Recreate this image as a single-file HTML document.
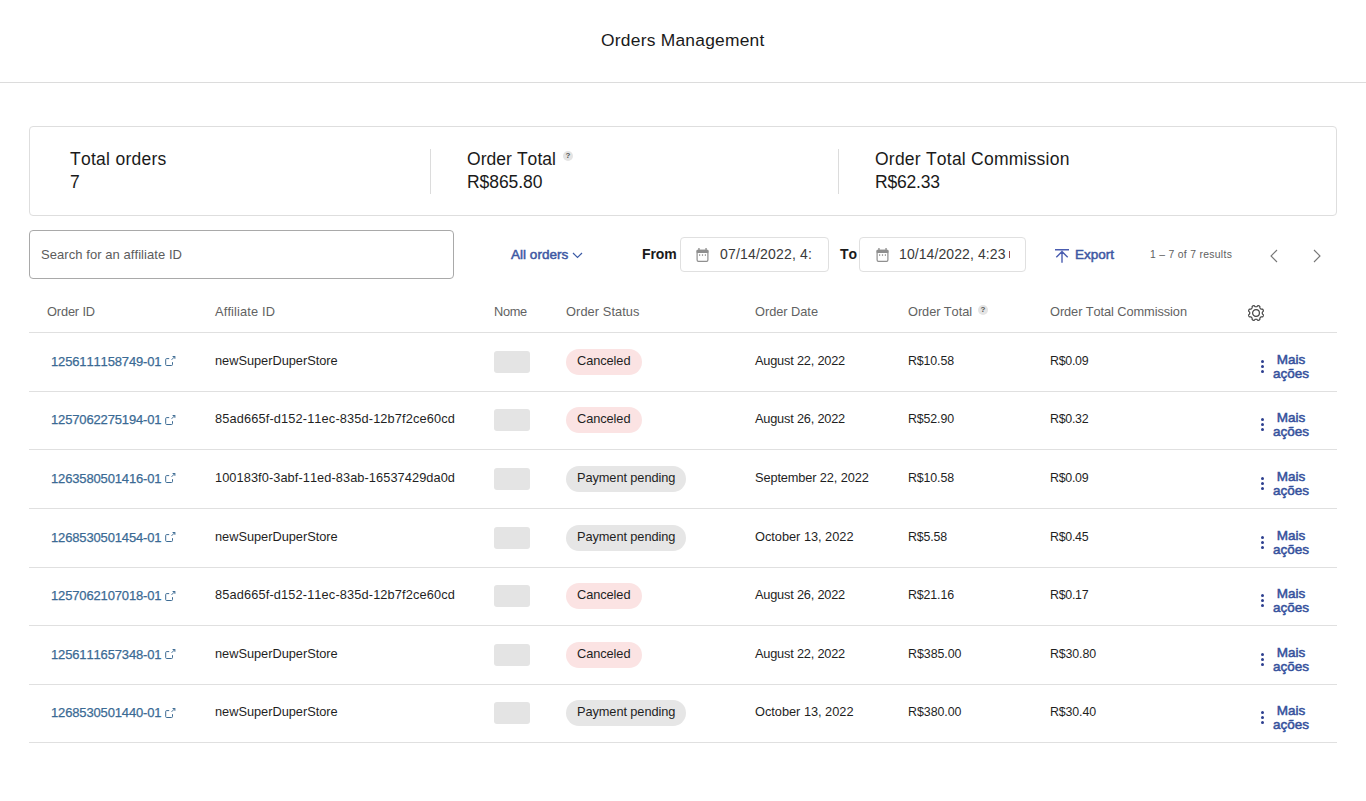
<!DOCTYPE html>
<html><head><meta charset="utf-8"><title>Orders Management</title>
<style>
*{box-sizing:border-box;margin:0;padding:0}
html,body{width:1366px;height:801px;overflow:hidden;background:#fff}
body{font-family:"Liberation Sans",sans-serif;color:#1f1f1f;position:relative;font-kerning:none}
.abs{position:absolute;white-space:nowrap}
.title{position:absolute;left:601px;top:30px;font-size:17.4px;line-height:20px;color:#1a1a1a;white-space:nowrap}
.hdrline{position:absolute;left:0;top:82px;width:1366px;height:1px;background:#dcdcdc}
.card{position:absolute;left:29px;top:126px;width:1308px;height:90px;border:1px solid #dedede;border-radius:4px}
.sum{position:absolute;font-size:17.5px;line-height:23px;color:#1a1a1a;white-space:nowrap}
.vdiv{position:absolute;top:149px;width:1px;height:45px;background:#dcdcdc}
.qm{position:absolute;width:10px;height:10px;border-radius:50%;background:#e4e4e4;color:#555;font-size:8px;line-height:10px;text-align:center;font-weight:bold}
.search{position:absolute;left:29px;top:230px;width:425px;height:49px;border:1px solid #a9a9a9;border-radius:4px}
.ph{position:absolute;left:11px;top:16px;font-size:13px;line-height:16px;color:#5c5c5c;white-space:nowrap}
.allord{position:absolute;left:511px;top:247px;font-size:13.5px;line-height:16px;color:#3d58a3;-webkit-text-stroke:0.5px #3d58a3;white-space:nowrap}
.lbl{position:absolute;top:246px;font-size:14px;line-height:16px;font-weight:bold;color:#1a1a1a}
.dinp{position:absolute;top:237px;height:35px;border:1px solid #e0e0e0;border-radius:4px}
.dt{position:absolute;top:8px;left:39px;font-size:14px;line-height:16px;color:#3a3a3a;white-space:nowrap}
.cal{position:absolute;top:10px}
.export{position:absolute;left:1075px;top:247px;font-size:13.5px;line-height:16px;color:#3d58a3;-webkit-text-stroke:0.5px #3d58a3;white-space:nowrap}
.results{position:absolute;left:1150px;top:248px;font-size:10.4px;line-height:13px;color:#606060;white-space:nowrap}
.th{position:absolute;top:304px;font-size:12.8px;line-height:16px;color:#626262;white-space:nowrap}
.tline{position:absolute;left:29px;width:1308px;height:1px;background:#e0e0e0}
.row{position:absolute;left:0;width:1366px}
.c{position:absolute;top:50%;margin-top:-9px;font-size:12.8px;line-height:16px;white-space:nowrap;color:#1f1f1f}
.oid{left:51px;color:#3a6a94;margin-top:-8px;font-size:13px;-webkit-text-stroke:0.25px #3a6a94}
.ext{position:absolute;left:113px;top:1.5px}
.aff{left:215px}
.sk{position:absolute;left:494px;top:50%;margin-top:-11px;width:36px;height:22px;border-radius:3px;background:#e4e4e4}
.pill{position:absolute;left:566px;top:50%;margin-top:-13px;height:26px;line-height:24px;border-radius:13px;padding:0 11px;font-size:12.8px;white-space:nowrap;color:#1f1f1f}
.cancel{background:#fbe3e3;width:76px}
.pend{background:#e6e6e6;width:120px}
.date{left:755px}
.tot{left:908px;font-size:12.4px}
.com{left:1050px;font-size:12.4px}
.dots{position:absolute;left:1261px;top:50%;margin-top:-2px;width:4px;height:13px}
.dots i{display:block;width:3px;height:3px;border-radius:50%;background:#2d3f8f;margin-bottom:2px}
.more{position:absolute;left:1271px;top:50%;margin-top:-9px;width:40px;text-align:center;font-size:13.5px;line-height:14px;color:#34509c;-webkit-text-stroke:0.5px #34509c}
</style></head><body>
<div class="title" style=";letter-spacing:0.242px">Orders Management</div>
<div class="hdrline"></div>
<div class="card"></div>
<div class="sum" style="left:70px;top:148px"><span style=";letter-spacing:0.272px">Total orders</span><br>7</div>
<div class="vdiv" style="left:430px"></div>
<div class="sum" style="left:467px;top:148px"><span style=";letter-spacing:0.048px">Order Total</span><br><span style=";letter-spacing:-0.054px">R$865.80</span></div><span class="qm" style="left:563px;top:151px">?</span>
<div class="vdiv" style="left:838px"></div>
<div class="sum" style="left:875px;top:148px"><span style=";letter-spacing:0.226px">Order Total Commission</span><br><span style=";letter-spacing:-0.180px">R$62.33</span></div>

<div class="search"><span class="ph" style=";letter-spacing:0.060px">Search for an affiliate ID</span></div>
<div class="allord"><span style=";letter-spacing:0.028px">All orders</span> <svg width="11" height="7" viewBox="0 0 11 7" style="vertical-align:middle"><path d="M1 1l4.5 4.5L10 1" fill="none" stroke="#3b5aa5" stroke-width="1.2"/></svg></div>
<div class="lbl" style="left:642px;letter-spacing:-0.100px">From</div>
<div class="dinp" style="left:680px;width:149px"><svg class="cal" style="left:15px" width="13" height="14" viewBox="0 0 13 14"><rect x="1.1" y="2.3" width="10.8" height="11" rx="1.3" fill="none" stroke="#8f8f8f" stroke-width="1.2"/><rect x="0.5" y="1.7" width="12" height="3.2" rx="1" fill="#8f8f8f"/><rect x="2.3" y="0" width="1.3" height="2.5" fill="#8f8f8f"/><rect x="9.4" y="0" width="1.3" height="2.5" fill="#8f8f8f"/><rect x="3" y="6.3" width="1.2" height="1.5" fill="#8f8f8f"/><rect x="5.9" y="6.3" width="1.2" height="1.5" fill="#8f8f8f"/><rect x="8.8" y="6.3" width="1.2" height="1.5" fill="#8f8f8f"/></svg><span class="dt" style=";letter-spacing:0.183px">07/14/2022, 4:</span></div>
<div class="lbl" style="left:840px;letter-spacing:0.000px">To</div>
<div class="dinp" style="left:859px;width:167px"><svg class="cal" style="left:16px" width="13" height="14" viewBox="0 0 13 14"><rect x="1.1" y="2.3" width="10.8" height="11" rx="1.3" fill="none" stroke="#8f8f8f" stroke-width="1.2"/><rect x="0.5" y="1.7" width="12" height="3.2" rx="1" fill="#8f8f8f"/><rect x="2.3" y="0" width="1.3" height="2.5" fill="#8f8f8f"/><rect x="9.4" y="0" width="1.3" height="2.5" fill="#8f8f8f"/><rect x="3" y="6.3" width="1.2" height="1.5" fill="#8f8f8f"/><rect x="5.9" y="6.3" width="1.2" height="1.5" fill="#8f8f8f"/><rect x="8.8" y="6.3" width="1.2" height="1.5" fill="#8f8f8f"/></svg><span class="dt" style=";letter-spacing:0.090px">10/14/2022, 4:23</span><i style="position:absolute;left:149px;top:13px;width:1px;height:7px;background:#9a4a4a"></i></div>
<svg class="abs" style="left:1054px;top:248px" width="16" height="16" viewBox="0 0 16 16"><path d="M1 1.7h14M8 3.3v11.5M2.3 9.3L8 3.6l5.7 5.7" fill="none" stroke="#4a5db0" stroke-width="1.4"/></svg>
<div class="export" style=";letter-spacing:-0.006px">Export</div>
<div class="results" style=";letter-spacing:0.296px">1 – 7 of 7 results</div>
<svg class="abs" style="left:1268px;top:249px" width="11" height="14" viewBox="0 0 11 14"><path d="M9 1L3 7l6 6" fill="none" stroke="#777" stroke-width="1.1"/></svg>
<svg class="abs" style="left:1312px;top:249px" width="11" height="14" viewBox="0 0 11 14"><path d="M2 1l6 6-6 6" fill="none" stroke="#777" stroke-width="1.1"/></svg>

<div class="th" style="left:47px;letter-spacing:-0.144px">Order ID</div>
<div class="th" style="left:215px;letter-spacing:0.145px">Affiliate ID</div>
<div class="th" style="left:494px;letter-spacing:-0.326px">Nome</div>
<div class="th" style="left:566px;letter-spacing:0.083px">Order Status</div>
<div class="th" style="left:755px;letter-spacing:-0.033px">Order Date</div>
<div class="th" style="left:908px;letter-spacing:-0.068px">Order Total</div><span class="qm" style="left:978px;top:305px">?</span>
<div class="th" style="left:1050px;letter-spacing:-0.078px">Order Total Commission</div>
<svg class="abs" style="left:1248px;top:305px" width="16" height="16" viewBox="0 0 16 16"><circle cx="8" cy="8" r="3.4" fill="none" stroke="#444" stroke-width="1.2"/><path d="M8.00,1.75 L8.25,1.75 L8.49,1.74 L8.75,1.69 L9.03,1.51 L9.37,1.13 L9.73,0.78 L10.07,0.64 L10.39,0.66 L10.68,0.73 L10.97,0.84 L11.24,0.97 L11.50,1.12 L11.73,1.33 L11.88,1.67 L11.89,2.18 L11.86,2.68 L11.94,3.01 L12.08,3.22 L12.25,3.41 L12.42,3.58 L12.59,3.75 L12.78,3.92 L12.99,4.06 L13.32,4.14 L13.82,4.11 L14.33,4.12 L14.67,4.27 L14.88,4.50 L15.03,4.76 L15.16,5.03 L15.27,5.32 L15.34,5.61 L15.36,5.93 L15.22,6.27 L14.87,6.63 L14.49,6.97 L14.31,7.25 L14.26,7.51 L14.25,7.75 L14.25,8.00 L14.25,8.25 L14.26,8.49 L14.31,8.75 L14.49,9.03 L14.87,9.37 L15.22,9.73 L15.36,10.07 L15.34,10.39 L15.27,10.68 L15.16,10.97 L15.03,11.24 L14.88,11.50 L14.67,11.73 L14.33,11.88 L13.82,11.89 L13.32,11.86 L12.99,11.94 L12.78,12.08 L12.59,12.25 L12.42,12.42 L12.25,12.59 L12.08,12.78 L11.94,12.99 L11.86,13.32 L11.89,13.82 L11.88,14.33 L11.73,14.67 L11.50,14.88 L11.24,15.03 L10.97,15.16 L10.68,15.27 L10.39,15.34 L10.07,15.36 L9.73,15.22 L9.37,14.87 L9.03,14.49 L8.75,14.31 L8.49,14.26 L8.25,14.25 L8.00,14.25 L7.75,14.25 L7.51,14.26 L7.25,14.31 L6.97,14.49 L6.63,14.87 L6.27,15.22 L5.93,15.36 L5.61,15.34 L5.32,15.27 L5.03,15.16 L4.76,15.03 L4.50,14.88 L4.27,14.67 L4.12,14.33 L4.11,13.82 L4.14,13.32 L4.06,12.99 L3.92,12.78 L3.75,12.59 L3.58,12.42 L3.41,12.25 L3.22,12.08 L3.01,11.94 L2.68,11.86 L2.18,11.89 L1.67,11.88 L1.33,11.73 L1.12,11.50 L0.97,11.24 L0.84,10.97 L0.73,10.68 L0.66,10.39 L0.64,10.07 L0.78,9.73 L1.13,9.37 L1.51,9.03 L1.69,8.75 L1.74,8.49 L1.75,8.25 L1.75,8.00 L1.75,7.75 L1.74,7.51 L1.69,7.25 L1.51,6.97 L1.13,6.63 L0.78,6.27 L0.64,5.93 L0.66,5.61 L0.73,5.32 L0.84,5.03 L0.97,4.76 L1.12,4.50 L1.33,4.27 L1.67,4.12 L2.18,4.11 L2.68,4.14 L3.01,4.06 L3.22,3.92 L3.41,3.75 L3.58,3.58 L3.75,3.41 L3.92,3.22 L4.06,3.01 L4.14,2.68 L4.11,2.18 L4.12,1.67 L4.27,1.33 L4.50,1.12 L4.76,0.97 L5.03,0.84 L5.32,0.73 L5.61,0.66 L5.93,0.64 L6.27,0.78 L6.63,1.13 L6.97,1.51 L7.25,1.69 L7.51,1.74 L7.75,1.75Z" fill="none" stroke="#444" stroke-width="1.2" stroke-linejoin="round"/></svg>
<div class="tline" style="top:332px"></div><div class="tline" style="top:391px"></div><div class="tline" style="top:449px"></div><div class="tline" style="top:508px"></div><div class="tline" style="top:567px"></div><div class="tline" style="top:625px"></div><div class="tline" style="top:684px"></div><div class="tline" style="top:742px"></div>
<div class="row" style="top:332px;height:59px">
<span class="c oid"><span style=";letter-spacing:-0.147px">1256111158749-01</span><svg class="ext" width="12" height="12" viewBox="0 0 12 12"><path d="M5.2 3.6H2.6Q1.7 3.6 1.7 4.5V9.6Q1.7 10.5 2.6 10.5H7.6Q8.5 10.5 8.5 9.6V7.2" fill="none" stroke="#3d6b93" stroke-width="1"/><path d="M8.6 1.5H10.9V3.8M10.9 1.5L7.6 4.8" fill="none" stroke="#3d6b93" stroke-width="1"/></svg></span>
<span class="c aff" style=";letter-spacing:-0.022px">newSuperDuperStore</span>
<span class="sk"></span>
<span class="pill cancel"><span style=";letter-spacing:-0.077px">Canceled</span></span>
<span class="c date" style=";letter-spacing:-0.215px">August 22, 2022</span>
<span class="c tot" style=";letter-spacing:-0.132px">R$10.58</span>
<span class="c com" style=";letter-spacing:-0.285px">R$0.09</span>
<span class="dots"><i></i><i></i><i></i></span>
<span class="more">Mais<br>ações</span>
</div><div class="row" style="top:391px;height:58px">
<span class="c oid"><span style=";letter-spacing:-0.147px">1257062275194-01</span><svg class="ext" width="12" height="12" viewBox="0 0 12 12"><path d="M5.2 3.6H2.6Q1.7 3.6 1.7 4.5V9.6Q1.7 10.5 2.6 10.5H7.6Q8.5 10.5 8.5 9.6V7.2" fill="none" stroke="#3d6b93" stroke-width="1"/><path d="M8.6 1.5H10.9V3.8M10.9 1.5L7.6 4.8" fill="none" stroke="#3d6b93" stroke-width="1"/></svg></span>
<span class="c aff" style=";letter-spacing:0.126px">85ad665f-d152-11ec-835d-12b7f2ce60cd</span>
<span class="sk"></span>
<span class="pill cancel"><span style=";letter-spacing:-0.077px">Canceled</span></span>
<span class="c date" style=";letter-spacing:-0.215px">August 26, 2022</span>
<span class="c tot" style=";letter-spacing:-0.132px">R$52.90</span>
<span class="c com" style=";letter-spacing:-0.285px">R$0.32</span>
<span class="dots"><i></i><i></i><i></i></span>
<span class="more">Mais<br>ações</span>
</div><div class="row" style="top:449px;height:59px">
<span class="c oid"><span style=";letter-spacing:-0.147px">1263580501416-01</span><svg class="ext" width="12" height="12" viewBox="0 0 12 12"><path d="M5.2 3.6H2.6Q1.7 3.6 1.7 4.5V9.6Q1.7 10.5 2.6 10.5H7.6Q8.5 10.5 8.5 9.6V7.2" fill="none" stroke="#3d6b93" stroke-width="1"/><path d="M8.6 1.5H10.9V3.8M10.9 1.5L7.6 4.8" fill="none" stroke="#3d6b93" stroke-width="1"/></svg></span>
<span class="c aff" style=";letter-spacing:0.066px">100183f0-3abf-11ed-83ab-16537429da0d</span>
<span class="sk"></span>
<span class="pill pend"><span style=";letter-spacing:-0.090px">Payment pending</span></span>
<span class="c date" style=";letter-spacing:-0.130px">September 22, 2022</span>
<span class="c tot" style=";letter-spacing:-0.132px">R$10.58</span>
<span class="c com" style=";letter-spacing:-0.285px">R$0.09</span>
<span class="dots"><i></i><i></i><i></i></span>
<span class="more">Mais<br>ações</span>
</div><div class="row" style="top:508px;height:59px">
<span class="c oid"><span style=";letter-spacing:-0.147px">1268530501454-01</span><svg class="ext" width="12" height="12" viewBox="0 0 12 12"><path d="M5.2 3.6H2.6Q1.7 3.6 1.7 4.5V9.6Q1.7 10.5 2.6 10.5H7.6Q8.5 10.5 8.5 9.6V7.2" fill="none" stroke="#3d6b93" stroke-width="1"/><path d="M8.6 1.5H10.9V3.8M10.9 1.5L7.6 4.8" fill="none" stroke="#3d6b93" stroke-width="1"/></svg></span>
<span class="c aff" style=";letter-spacing:-0.022px">newSuperDuperStore</span>
<span class="sk"></span>
<span class="pill pend"><span style=";letter-spacing:-0.090px">Payment pending</span></span>
<span class="c date" style=";letter-spacing:-0.025px">October 13, 2022</span>
<span class="c tot" style=";letter-spacing:-0.176px">R$5.58</span>
<span class="c com" style=";letter-spacing:-0.285px">R$0.45</span>
<span class="dots"><i></i><i></i><i></i></span>
<span class="more">Mais<br>ações</span>
</div><div class="row" style="top:567px;height:58px">
<span class="c oid"><span style=";letter-spacing:-0.147px">1257062107018-01</span><svg class="ext" width="12" height="12" viewBox="0 0 12 12"><path d="M5.2 3.6H2.6Q1.7 3.6 1.7 4.5V9.6Q1.7 10.5 2.6 10.5H7.6Q8.5 10.5 8.5 9.6V7.2" fill="none" stroke="#3d6b93" stroke-width="1"/><path d="M8.6 1.5H10.9V3.8M10.9 1.5L7.6 4.8" fill="none" stroke="#3d6b93" stroke-width="1"/></svg></span>
<span class="c aff" style=";letter-spacing:0.126px">85ad665f-d152-11ec-835d-12b7f2ce60cd</span>
<span class="sk"></span>
<span class="pill cancel"><span style=";letter-spacing:-0.077px">Canceled</span></span>
<span class="c date" style=";letter-spacing:-0.215px">August 26, 2022</span>
<span class="c tot" style=";letter-spacing:-0.132px">R$21.16</span>
<span class="c com" style=";letter-spacing:-0.285px">R$0.17</span>
<span class="dots"><i></i><i></i><i></i></span>
<span class="more">Mais<br>ações</span>
</div><div class="row" style="top:625px;height:59px">
<span class="c oid"><span style=";letter-spacing:-0.147px">1256111657348-01</span><svg class="ext" width="12" height="12" viewBox="0 0 12 12"><path d="M5.2 3.6H2.6Q1.7 3.6 1.7 4.5V9.6Q1.7 10.5 2.6 10.5H7.6Q8.5 10.5 8.5 9.6V7.2" fill="none" stroke="#3d6b93" stroke-width="1"/><path d="M8.6 1.5H10.9V3.8M10.9 1.5L7.6 4.8" fill="none" stroke="#3d6b93" stroke-width="1"/></svg></span>
<span class="c aff" style=";letter-spacing:-0.022px">newSuperDuperStore</span>
<span class="sk"></span>
<span class="pill cancel"><span style=";letter-spacing:-0.077px">Canceled</span></span>
<span class="c date" style=";letter-spacing:-0.215px">August 22, 2022</span>
<span class="c tot" style=";letter-spacing:-0.033px">R$385.00</span>
<span class="c com" style=";letter-spacing:-0.132px">R$30.80</span>
<span class="dots"><i></i><i></i><i></i></span>
<span class="more">Mais<br>ações</span>
</div><div class="row" style="top:684px;height:58px">
<span class="c oid"><span style=";letter-spacing:-0.147px">1268530501440-01</span><svg class="ext" width="12" height="12" viewBox="0 0 12 12"><path d="M5.2 3.6H2.6Q1.7 3.6 1.7 4.5V9.6Q1.7 10.5 2.6 10.5H7.6Q8.5 10.5 8.5 9.6V7.2" fill="none" stroke="#3d6b93" stroke-width="1"/><path d="M8.6 1.5H10.9V3.8M10.9 1.5L7.6 4.8" fill="none" stroke="#3d6b93" stroke-width="1"/></svg></span>
<span class="c aff" style=";letter-spacing:-0.022px">newSuperDuperStore</span>
<span class="sk"></span>
<span class="pill pend"><span style=";letter-spacing:-0.090px">Payment pending</span></span>
<span class="c date" style=";letter-spacing:-0.025px">October 13, 2022</span>
<span class="c tot" style=";letter-spacing:-0.033px">R$380.00</span>
<span class="c com" style=";letter-spacing:-0.132px">R$30.40</span>
<span class="dots"><i></i><i></i><i></i></span>
<span class="more">Mais<br>ações</span>
</div>
</body></html>
